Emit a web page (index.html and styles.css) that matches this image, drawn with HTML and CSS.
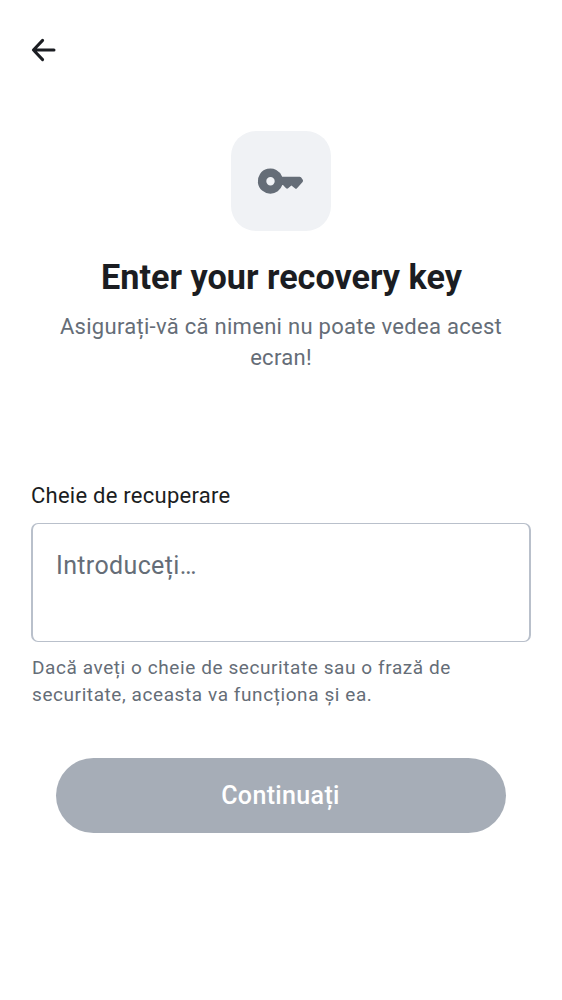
FILE: index.html
```html
<!DOCTYPE html>
<html lang="ro">
<head>
<meta charset="utf-8">
<title>Recovery key</title>
<link rel="stylesheet" href="styles.css">
</head>
<body>
<main class="screen">
  <header class="topbar">
    <svg class="back" viewBox="0 0 32 32"><path d="M26 16H5.6M14.6 6.4L5.4 16l9.2 9.6"/></svg>
  </header>
  <section class="intro">
    <div class="badge">
      <svg class="key" viewBox="0 0 50 50"><path fill-rule="evenodd" d="M14.5 37.7a12.6 12.6 0 1 1 11.7-17H43.6q.8 0 1.4.6l1.6 2.2q1 1.3 0 2.5l-5.6 6.3q-1 1-2.1 0l-3.5-2.9-3.3 2.9q-1 .9-2 0L27 29.1h-.7a12.6 12.6 0 0 1-11.8 8.6zm0-8.3a4.2 4.2 0 1 0 0-8.4 4.2 4.2 0 0 0 0 8.4z"/></svg>
    </div>
    <h1 class="title">Enter your recovery key</h1>
    <p class="subtitle">Asigurați-vă că nimeni nu poate vedea acest ecran!</p>
  </section>
  <section class="form">
    <label class="label" for="key">Cheie de recuperare</label>
    <textarea class="field" id="key" placeholder="Introduceți…"></textarea>
    <p class="help">Dacă aveți o cheie de securitate sau o frază de securitate, aceasta va funcționa și ea.</p>
  </section>
  <button class="submit" disabled>Continuați</button>
</main>
</body>
</html>
```
FILE: styles.css
```css
* { box-sizing: border-box; }
body { margin: 0; background: #fff; font-family: Roboto, sans-serif; color: #1b1d22; }
.screen { display: flex; flex-direction: column; height: 1000px; padding: 0 31px; }
.topbar { height: 131px; padding-top: 34px; margin-left: -3px; }
.back { display: block; width: 32px; height: 32px; fill: none; stroke: #1b1d22; stroke-width: 3; stroke-linecap: round; stroke-linejoin: round; }
.intro { display: flex; flex-direction: column; align-items: center; height: 349px; text-align: center; }
.badge { display: flex; align-items: center; justify-content: center; width: 100px; height: 100px; border-radius: 25px; background: #f0f2f5; }
.key { width: 50px; height: 50px; fill: #656d77; }
.title { margin: 25px 0 0; padding-left: 1px; font-size: 34.2px; line-height: 42px; font-weight: 700; white-space: nowrap; }
.subtitle { margin: 13px 0 0; width: 450px; font-size: 22px; line-height: 31px; letter-spacing: .29px; color: #656d77; }
.form { display: flex; flex-direction: column; height: 278px; }
.label { font-size: 22px; line-height: 31px; letter-spacing: .25px; }
.field { margin-top: 12px; height: 119px; padding: 24px 23px; border: 1px solid #b9c0cb; border-width: 1px 2px; border-radius: 7px; resize: none; font: 25px/36px Roboto, sans-serif; letter-spacing: .36px; }
.field::placeholder { color: #656d77; opacity: 1; }
.help { margin: 12px 0 0 1px; width: 450px; font-size: 19px; line-height: 27px; letter-spacing: .58px; color: #656d77; }
.submit { height: 75px; margin: 0 25px; padding: 0 1px 0 0; border: 0; border-radius: 38px; background: #a6adb7; color: #fff; font: 500 25px/37px Roboto, sans-serif; letter-spacing: .35px; }
```
